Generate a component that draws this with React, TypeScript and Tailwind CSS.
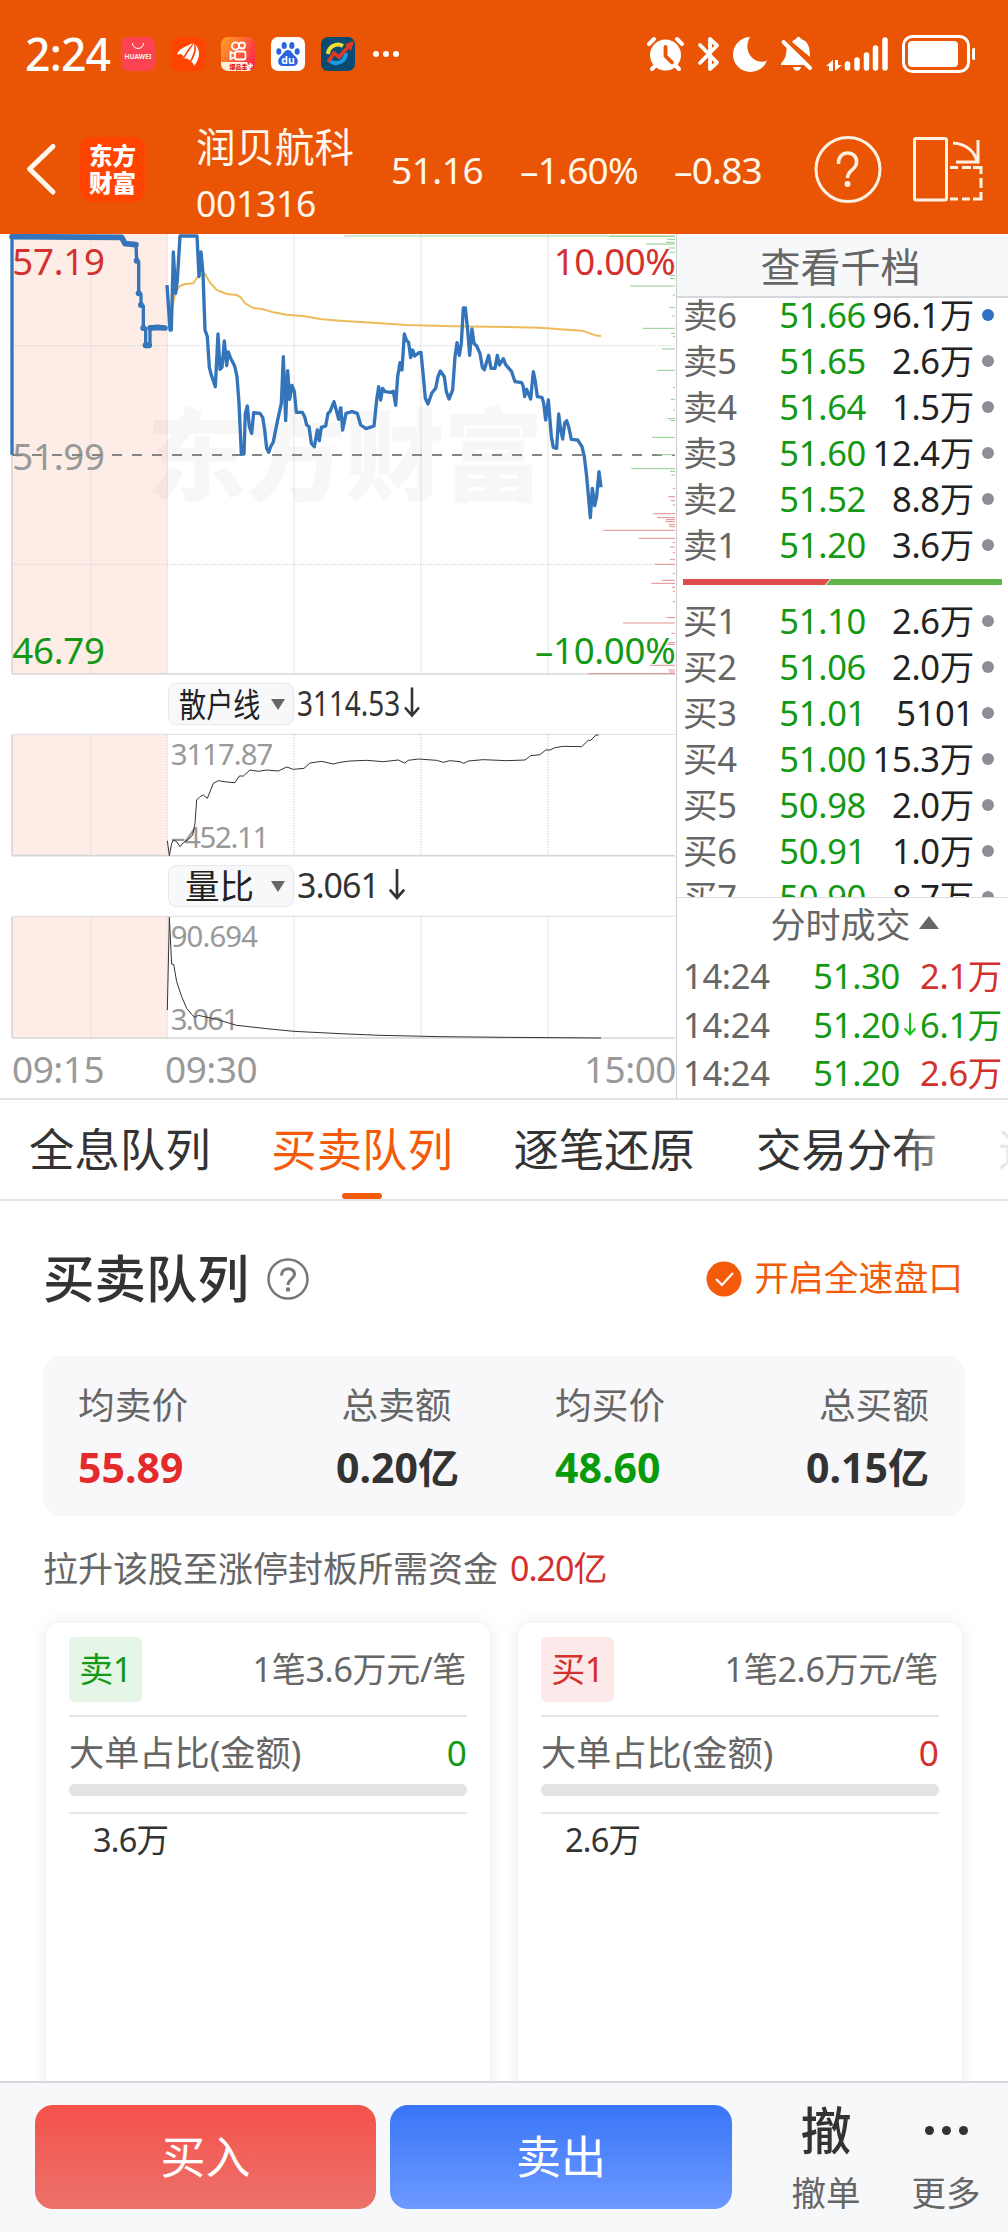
import React from 'react';

interface BookRow {
  label: string;
  price: string;
  volume: string;
  highlight?: boolean;
}

interface TradeRow {
  time: string;
  price: string;
  volume: string;
  side: 'buy' | 'sell';
  arrow?: boolean;
}

const sellRows: BookRow[] = [
  { label: '卖6', price: '51.66', volume: '96.1万', highlight: true },
  { label: '卖5', price: '51.65', volume: '2.6万' },
  { label: '卖4', price: '51.64', volume: '1.5万' },
  { label: '卖3', price: '51.60', volume: '12.4万' },
  { label: '卖2', price: '51.52', volume: '8.8万' },
  { label: '卖1', price: '51.20', volume: '3.6万' },
];

const buyRows: BookRow[] = [
  { label: '买1', price: '51.10', volume: '2.6万' },
  { label: '买2', price: '51.06', volume: '2.0万' },
  { label: '买3', price: '51.01', volume: '5101' },
  { label: '买4', price: '51.00', volume: '15.3万' },
  { label: '买5', price: '50.98', volume: '2.0万' },
  { label: '买6', price: '50.91', volume: '1.0万' },
  { label: '买7', price: '50.90', volume: '8.7万' },
];

const trades: TradeRow[] = [
  { time: '14:24', price: '51.30', volume: '2.1万', side: 'buy' },
  { time: '14:24', price: '51.20', volume: '6.1万', side: 'sell', arrow: true },
  { time: '14:24', price: '51.20', volume: '2.6万', side: 'buy' },
];

const tabs = ['全息队列', '买卖队列', '逐笔还原', '交易分布', '逐'];

// Chart units are a third of a pixel
const auctionLine =
  '36,674 36,20 365,22 375,42 408,44 410,92 416,95 416,190 423,192 423,225 430,228 430,294 437,296 437,346 450,346 450,293 472,291 497,294';
const auctionDots = [[410, 92], [416, 190], [423, 225], [430, 294], [437, 346], [447, 346], [452, 294]];

const priceMorning =
  '501,165 510,300 514,300 520,66 527,190 532,150 540,18 591,18 597,140 603,66 609,130 615,300 622,320 628,412 634,435 646,470 654,312 660,418 666,412 673,333 680,407 685,366 692,385 704,408 711,440 717,520 724,672 732,672 736,550 742,528 748,590 755,610 761,548 780,550 788,562 794,600 800,655 806,667 812,650 820,635 832,575 844,520 850,380 857,572 863,422 869,508 876,466 883,485 889,547 907,547 914,560 920,585 927,590 934,640 943,650 952,600 958,632 964,592 977,588 984,550 990,545 1002,515 1016,568 1022,530';
const priceAfternoon =
  '2,530 8,600 18,550 36,545 52,550 62,585 78,596 102,588 110,510 116,470 122,510 128,475 135,485 152,487 160,484 167,526 173,440 180,398 186,420 193,312 199,330 206,338 212,383 218,360 224,378 237,368 243,367 250,440 256,505 264,522 275,490 287,475 294,440 301,423 313,440 319,485 327,507 338,480 345,380 351,338 358,376 364,340 370,234 376,234 383,300 389,376 396,297 402,340 410,348 420,370 427,412 433,419 446,376 453,415 465,415 472,376 478,405 490,386 497,404 515,425 525,455 545,458 550,470 554,500 560,478 572,507 580,425 586,455 592,500 606,502 611,520 617,570 625,510 634,620 640,652 650,655 656,552 662,600 668,627 674,580 680,572 686,590 694,628 713,630 726,650 733,680 740,740 751,863 757,775 764,827 770,800 777,725 783,772';

const avgMorning =
  '501,165 511,262 527,185 540,168 552,163 580,160 595,138 615,132 630,158 650,180 680,192 710,195 722,202 735,220 760,234 790,238 820,247 860,254 915,259 960,267 1020,272';
const avgAfternoon =
  '0,272 100,278 200,285 340,289 500,291 600,293 660,298 725,302 745,308 765,316 783,318';

const retailMorning =
  '502,512 508,557 515,520 520,510 530,515 540,530 550,518 565,508 578,495 585,460 590,390 600,380 610,375 622,385 640,340 655,332 680,336 705,338 718,318 730,318 750,300 775,304 800,300 835,303 860,291 880,298 912,295 930,279 965,274 1000,282 1020,277';
const retailAfternoon =
  '0,277 30,273 80,271 130,275 175,270 194,279 205,271 235,267 290,271 310,277 330,272 360,275 371,280 385,273 430,269 500,272 555,270 572,257 600,254 617,240 630,240 645,233 670,229 725,230 745,211 752,211 768,195 776,195';

const ratioMorning =
  '502,1020 508,742 515,883 521,883 530,935 545,980 560,1015 583,1042 595,1036 650,1048 710,1066 800,1076 882,1084 1020,1091';
const ratioAfternoon = '0,1091 120,1096 300,1100 500,1102 783,1104';

// [left, y] pairs, every bar grows from the right edge of the chart
const greenBars = [
  [808, 19], [982, 28], [978, 37], [918, 42], [986, 54], [990, 67], [992, 110], [988, 136], [990, 146],
  [870, 168], [998, 195], [988, 233], [996, 258], [908, 295], [993, 310], [998, 320], [966, 357], [951, 421],
  [999, 472], [992, 508], [999, 540], [982, 566], [992, 572], [936, 622], [953, 674], [874, 716], [990, 724], [994, 735],
];
const redBars = [
  [998, 775], [985, 800], [992, 812], [998, 825], [940, 851], [951, 863], [978, 869], [976, 875], [986, 884],
  [988, 890], [790, 901], [896, 925], [998, 938], [990, 951], [998, 968], [990, 989], [945, 1003], [998, 1030],
  [965, 1051], [934, 1060], [996, 1072], [998, 1085], [999, 1115], [980, 1163], [849, 1179], [994, 1210],
  [985, 1238], [980, 1243], [930, 1306], [985, 1320], [988, 1326], [745, 1331],
];

const gridX = [273, 502, 882, 1263, 1644];

const GridLines = ({ top, bottom }: { top: number; bottom: number }) => (
  <g>
    <rect x={36} y={top} width={466} height={bottom - top} fill="#fdede6" />
    {gridX.map((x) => (
      <line key={x} x1={x} x2={x} y1={top} y2={bottom} stroke="#d9d9d9" strokeWidth={4} strokeDasharray="4 4" />
    ))}
    <line x1={36} x2={36} y1={top} y2={bottom} stroke="#d8d8d8" strokeWidth={5} />
    <line x1={36} x2={2025} y1={bottom} y2={bottom} stroke="#d6d6d6" strokeWidth={5} />
  </g>
);

const PriceChart = () => (
  <svg className="block h-[442px] w-[676px]" viewBox="0 12 2028 1326" fontSize={110}>
    <GridLines top={12} bottom={1332} />
    <text
      x={440} y={788} fontSize={300} fontWeight={900} textLength={1190} fill="#000" opacity={0.027}
    >
      东方财富
    </text>
    {[347, 1003].map((y) => (
      <line key={y} x1={36} x2={2025} y1={y} y2={y} stroke="#d0d0d0" strokeWidth={3} strokeDasharray="4 4" />
    ))}
    <text x={37} y={719} fill="#999" textLength={278}>51.99</text>
    <line x1={36} x2={2025} y1={675} y2={675} stroke="#858585" strokeWidth={6} strokeDasharray="30 30" />
    <line x1={1032} x2={2025} y1={18} y2={18} stroke="#c5dfc0" strokeWidth={5} />
    <g transform="translate(1020 0)">
      {greenBars.map(([x, y]) => (
        <line key={y} x1={x} x2={1005} y1={y} y2={y} stroke="#8fce8f" strokeWidth={3} />
      ))}
      {redBars.map(([x, y]) => (
        <line key={y} x1={x} x2={1005} y1={y} y2={y} stroke="#e38f8f" strokeWidth={3} />
      ))}
    </g>
    <g fill="none" stroke="#edbb58" strokeWidth={6}>
      <polyline points={avgMorning} />
      <polyline points={avgAfternoon} transform="translate(1020 0)" />
    </g>
    <g fill="none" stroke="#3374bb" strokeWidth={10} strokeLinejoin="round">
      <polyline points={auctionLine} />
      <polyline points={priceMorning} />
      <polyline points={priceAfternoon} transform="translate(1020 0)" />
    </g>
    <g fill="none" stroke="#3374bb" strokeWidth={17} strokeLinecap="round" strokeLinejoin="round">
      <path d="M36 20L365 22L375 41L408 44M437 346H446M450 294L472 292L495 294" />
    </g>
    {auctionDots.map(([x, y]) => (
      <circle key={`${x}-${y}`} cx={x} cy={y} r={9} fill="#3374bb" />
    ))}
    <text x={37} y={135} fill="#d3312d" textLength={278}>57.19</text>
    <text x={37} y={1301} fill="#149914" textLength={278}>46.79</text>
    <text x={2027} y={135} fill="#d3312d" textAnchor="end" textLength={366}>10.00%</text>
    <text x={2027} y={1301} fill="#149914" textAnchor="end" textLength={422}>–10.00%</text>
  </svg>
);

const RetailChart = () => (
  <svg className="block h-[124px] w-[676px]" viewBox="0 189 2028 372" fontSize={88} fill="#999">
    <GridLines top={194} bottom={557} />
    <line x1={36} x2={2025} y1={193} y2={193} stroke="#dcdcdc" strokeWidth={3} />
    <text x={512} y={285} textLength={308}>3117.87</text>
    <text x={512} y={534} textLength={296}>–452.11</text>
    <g fill="none" stroke="#333" strokeWidth={3}>
      <polyline points={retailMorning} />
      <polyline points={retailAfternoon} transform="translate(1020 0)" />
    </g>
  </svg>
);

const RatioChart = () => (
  <svg className="block h-[125px] w-[676px]" viewBox="0 735 2028 375" fontSize={88} fill="#999">
    <GridLines top={740} bottom={1104} />
    <line x1={36} x2={2025} y1={739} y2={739} stroke="#dcdcdc" strokeWidth={3} />
    <text x={512} y={831} textLength={262}>90.694</text>
    <text x={512} y={1080} textLength={206}>3.061</text>
    <g fill="none" stroke="#333" strokeWidth={3}>
      <polyline points={ratioMorning} />
      <polyline points={ratioAfternoon} transform="translate(1020 0)" />
    </g>
  </svg>
);

const DownArrow = ({ className }: { className: string }) => (
  <svg className={className} viewBox="0 0 16 30" fill="none" stroke="currentColor" strokeWidth={2.6}>
    <path d="M8 0V28M1 20L8 28L15 20" />
  </svg>
);

const StatusBar = () => (
  <div className="flex h-[108px] items-center text-white">
    <span className="ml-[25px] w-[96px] text-[44.5px] leading-none font-medium tracking-[-0.8px]">2:24</span>
    <div className="flex items-center gap-4">
      <svg className="size-[34px]" viewBox="0 0 34 34">
        <rect width={34} height={34} rx={7} fill="#fb4351" />
        <path d="M11.500 6a5.500 5.500 0 0 0 11 0" fill="none" stroke="#fff" strokeWidth={1} />
        <text x={17} y={22} fontSize={6.6} fontWeight={600} fill="#fff" textAnchor="middle" textLength={27}>HUAWEI</text>
      </svg>
      <svg className="size-[34px]" viewBox="0 0 34 34">
        <rect width={34} height={34} rx={7} fill="#ff4300" />
        <path d="M6 18C7 12 14 10 22 6C19 11 15 15 13 20C11 17 9 16 6 18Z" fill="#fff" />
        <path d="M13 22C16 16 21 11 23 5.500C25 11 22 18 19 24C18 22 16 21 13 22Z" fill="#fff" />
        <path d="M20 25C24 19 26 13 24 7C30 13 29 22 23 29C23 27 22 26 20 25Z" fill="#fff" />
        <path d="M12.500 21C15 15 19 10 23 6M19.500 25C23 19 25 12 23.500 6" fill="none" stroke="#ff4300" strokeWidth={1} />
      </svg>
      <svg className="size-[34px]" viewBox="0 0 34 34">
        <defs>
          <linearGradient id="ks" x1="0" y1="0" x2="1" y2="0.6">
            <stop offset="0" stopColor="#ffa526" />
            <stop offset="1" stopColor="#ff2f45" />
          </linearGradient>
          <clipPath id="ksClip"><rect width={34} height={34} rx={7} /></clipPath>
        </defs>
        <g clipPath="url(#ksClip)">
          <rect width={34} height={34} fill="url(#ks)" />
          <path d="M0 25H26L30 34H0Z" fill="#fdeedd" />
        </g>
        <g fill="none" stroke="#fff" strokeWidth={1.800}>
          <circle cx={14.500} cy={9} r={3.600} />
          <circle cx={21} cy={8.500} r={3} />
          <rect x={14} y={14.500} width={10.500} height={8} rx={2} />
          <path d="M14 17L9.500 15V22L14 20" />
        </g>
        <text x={8.500} y={32} fontSize={6} fontWeight={900} fill="#e01d1d">爆品金</text>
        <path d="M29.500 26V31M27 28.500H32" stroke="#fff" strokeWidth={1.500} />
      </svg>
      <svg className="size-[34px]" viewBox="0 0 34 34">
        <rect width={34} height={34} rx={7} fill="#fff" />
        <g fill="#2a62e0">
          <ellipse cx={7.800} cy={14.500} rx={2.500} ry={3.300} />
          <ellipse cx={13.200} cy={8.500} rx={2.600} ry={3.600} />
          <ellipse cx={20.800} cy={8.500} rx={2.600} ry={3.600} />
          <ellipse cx={26.200} cy={14.500} rx={2.500} ry={3.300} />
          <path d="M17 13C20 13 21 16 24 19C28 22 28 29 22 29H12C6 29 6 22 10 19C13 16 14 13 17 13Z" />
        </g>
        <text x={17} y={27} fontSize={10.500} fontWeight={700} fill="#fff" textAnchor="middle">du</text>
      </svg>
      <svg className="size-[34px]" viewBox="0 0 34 34">
        <rect width={34} height={34} rx={7} fill="#0b4a72" />
        <path d="M7 17A10 10 0 0 1 22 9" fill="none" stroke="#f2dc2e" strokeWidth={4} />
        <path d="M25 16A10 10 0 0 1 9 24" fill="none" stroke="#1d9ae0" strokeWidth={4} />
        <path d="M7 25L13 16L18 20L28 9" fill="none" stroke="#e03a24" strokeWidth={3.500} />
        <path d="M24 7L33 4L30 14Z" fill="#e03a24" />
      </svg>
    </div>
    <div className="ml-[18px] flex gap-1">
      <i className="size-1.5 rounded-full bg-white" />
      <i className="size-1.5 rounded-full bg-white" />
      <i className="size-1.5 rounded-full bg-white" />
    </div>
    <svg className="mr-[33px] ml-auto h-[40px] w-[332px]" viewBox="643 33 332 40" fill="#fff">
      {/* alarm */}
      <circle cx={665.500} cy={54} r={15.500} />
      <g stroke="#fff" strokeWidth={4} strokeLinecap="round">
        <path d="M649 43L654 38M682 43L677 38M652 68L656 64M679 68L675 64" />
      </g>
      <path d="M665.500 46V55L672 61.500" fill="none" stroke="#e95504" strokeWidth={3.800} strokeLinecap="round" />
      {/* bluetooth */}
      <path d="M700 44L717 61.500L710 68V38L717 44.500L700 62" fill="none" stroke="#fff" strokeWidth={3.800} strokeLinejoin="round" strokeLinecap="round" />
      {/* do not disturb */}
      <path d="M750 36A17.500 17.500 0 1 0 767 59.500C757 65 741 52 750 36Z" />
      {/* muted bell */}
      <path d="M787 45L806 64H782C780 64 781 62 783 60C787 55 786 50 787 45ZM792 41C793 39 795 38.500 796 38C797 35 800 35 801 38C808 40 810 46 810 56ZM793 66H801C800 71 794 71 793 66Z" />
      <path d="M783.500 41L810 67" stroke="#fff" strokeWidth={4} strokeLinecap="round" />
      {/* signal */}
      <path d="M833 70V59L826 65H829V70ZM835 59V70L842 64H838V59Z" />
      <g stroke="#fff" strokeWidth={5.500} strokeLinecap="round">
        <path d="M847.500 63V67M857 59V67M866.500 54V67M875.500 47V67M885 39V67" />
      </g>
      {/* battery */}
      <rect x={903.500} y={35.500} width={65} height={35} rx={9} fill="none" stroke="#fff" strokeWidth={3} />
      <rect x={908} y={40} width={50} height={26} rx={4} />
      <rect x={972} y={47} width={4} height={12} rx={2} />
    </svg>
  </div>
);

const StockHeader = () => (
  <div className="flex h-[126px] items-start text-[#fff7ec]">
    <svg className="mt-[34px] ml-[25px] h-[54px] w-[33px]" viewBox="0 0 33 54" fill="none" stroke="#fff7ec" strokeWidth={5} strokeLinecap="round" strokeLinejoin="round">
      <path d="M28 4.500L4.500 27L28 50" />
    </svg>
    <div className="mt-[29px] ml-[22px] flex size-[65px] flex-col items-center justify-center rounded-xl bg-[#ff4400] text-[23.5px] leading-[27px] font-black text-white">
      <span>东方</span>
      <span>财富</span>
    </div>
    <div className="mt-[15px] ml-[51px] w-[195px]">
      <div className="text-[39.5px] leading-[48px]">润贝航科</div>
      <div className="mt-1 text-[35.5px] leading-[56px] tracking-[-0.3px]">001316</div>
    </div>
    <div className="mt-[38px] flex text-[37px] leading-[48px] tracking-[-0.5px]">
      <span className="w-[129px]">51.16</span>
      <span className="w-[154px] tracking-[-0.8px]">–1.60%</span>
      <span className="tracking-[-0.8px]">–0.83</span>
    </div>
    <svg className="mt-[27px] mr-[24px] ml-auto h-[68px] w-[170px]" viewBox="815 135 170 68" fill="none" stroke="#fff1e2" strokeWidth={3}>
      <circle cx={849} cy={169.500} r={32} />
      <path d="M839.500 164C838.500 149 859 150 857.500 163C857 170 848.500 170 848.500 178" strokeWidth={3.500} />
      <circle cx={848.500} cy={184} r={1.500} />
      <rect x={915.500} y={138.500} width={32} height={61.500} rx={1.500} />
      <path d="M954 143C968 144 976 152 978 162M979 140V162H957" />
      <path d="M951 167.500H959M963 167.500H972M974 167.500H982V174M982 178V188M982 192V199H974M971 199H963M959 199H951" />
    </svg>
  </div>
);

const Selector = ({ children }: { children: React.ReactNode }) => (
  <div className="flex h-[42px] w-[126px] shrink-0 items-center justify-between rounded-lg border-[1.5px] border-[#e6e8eb] bg-[#f7f8fa] pr-2 text-[#222]">
    {children}
    <svg className="h-[11px] w-[14px]" viewBox="0 0 14 11" fill="#666"><path d="M0 0H14L7 11Z" /></svg>
  </div>
);

const BookLine = ({ row }: { row: BookRow }) => (
  <div className="flex h-[46px] shrink-0 items-center text-[34.5px] leading-[46px] tracking-[-0.3px]">
    <span className="w-[96px] pl-1.5 text-[#666]">{row.label}</span>
    <span className="w-[93px] text-right text-[#149914]">{row.price}</span>
    <span className="w-[108px] text-right whitespace-nowrap text-[#222]">{row.volume}</span>
    <i className={`ml-2 size-3 rounded-full ${row.highlight ? 'bg-[#2f72c4]' : 'bg-[#8e8e96]'}`} />
  </div>
);

const OrderBook = () => (
  <div className="flex w-[332px] flex-col border-l border-[#ccc]">
    <div className="h-[64px] shrink-0 border-b-2 border-[#d5d8dc] bg-[#f7f8fa] pr-1 text-center text-[40px] leading-[65px] text-[#666]">
      查看千档
    </div>
    <div className="h-[599px] overflow-hidden">
      <div className="-mt-1.5">
        {sellRows.map((row) => <BookLine key={row.label} row={row} />)}
      </div>
      <svg className="mt-[11px] mb-[13px] ml-1.5 block h-1.5 w-[319px]" viewBox="0 0 319 6">
        <path d="M0 0H147L142 6H0Z" fill="#dc4d4d" />
        <path d="M148 0H319V6H143Z" fill="#5fb54a" />
      </svg>
      <div>
        {buyRows.map((row) => <BookLine key={row.label} row={row} />)}
      </div>
    </div>
    <div className="border-t border-[#dcdcdc]">
      <div className="flex h-[54px] items-center justify-center gap-2 pl-6 text-[35px] leading-[54px] text-[#666]">
        分时成交
        <svg className="mb-1.5 h-[13px] w-5" viewBox="0 0 20 13" fill="#666"><path d="M0 13L10 0L20 13Z" /></svg>
      </div>
      {trades.map((t, i) => (
        <div key={i} className="flex h-[48.5px] items-center text-[34.5px] leading-[48px] tracking-[-0.3px]">
          <span className="w-[128px] pl-1.5 text-[#666]">{t.time}</span>
          <span className="w-[95px] text-right text-[#149914]">{t.price}</span>
          <span className="flex w-5 justify-center text-[#11c711]">
            {t.arrow && <DownArrow className="h-[23px] w-4 overflow-visible" />}
          </span>
          <span className={`w-[80px] text-right whitespace-nowrap ${t.side === 'buy' ? 'text-[#d3312d]' : 'text-[#149914]'}`}>
            {t.volume}
          </span>
        </div>
      ))}
    </div>
  </div>
);

const ChartPanel = () => (
  <div className="w-[676px]">
    <PriceChart />
    <div className="flex h-[57px] items-start pt-[7px] pl-[168px] text-[34px] leading-[40px]">
      <Selector><span className="w-[80px] origin-left translate-x-2.5 scale-x-[0.81] text-[33.5px] whitespace-nowrap">散户线</span></Selector>
      <span className="ml-[3px] w-[107px] origin-left scale-x-[0.82] text-[#333]">3114.53</span>
      <DownArrow className="mt-1 h-[31px] w-4 text-[#333]" />
    </div>
    <RetailChart />
    <div className="flex h-[58px] items-start pt-2 pl-[168px] text-[34px] leading-[40px]">
      <Selector><span className="pl-4 text-[34.5px]">量比</span></Selector>
      <span className="ml-[3px] w-[91px] tracking-[-1px] text-[#333]">3.061</span>
      <DownArrow className="mt-1 h-[31px] w-[18px] text-[#333]" />
    </div>
    <RatioChart />
    <div className="flex h-[58px] pl-[12px] text-[37px] leading-[57px] tracking-[-0.5px] text-[#999]">
      <span className="w-[153px]">09:15</span>
      <span>09:30</span>
      <span className="ml-auto">15:00</span>
    </div>
  </div>
);

const TabBar = () => (
  <div className="relative flex h-[103px] overflow-hidden border-y-2 border-[#e3e3e3] pl-[29px]">
    {tabs.map((tab, i) => (
      <div key={i} className={`flex w-[242.3px] shrink-0 flex-col text-[45.4px] leading-[99px] ${i === 1 ? 'text-[#f35a0a]' : 'text-[#333]'}`}>
        <span className="h-[93px]">{tab}</span>
        {i === 1 && <i className="ml-[71px] h-1.5 w-10 rounded-full bg-[#f35a0a]" />}
      </div>
    ))}
    <div className="absolute inset-y-0 right-0 w-[110px] bg-linear-to-r from-white/0 via-white/70 to-white/90" />
  </div>
);

interface QueueCardProps {
  badge: string;
  badgeClass: string;
  summary: string;
  ratioClass: string;
  amount: string;
}

const QueueCard: React.FC<QueueCardProps> = ({ badge, badgeClass, summary, ratioClass, amount }) => (
  <div className="h-[520px] w-[444px] rounded-xl bg-white px-[23px] pt-[14px] text-[#666] shadow-[0_0_16px_rgba(0,0,0,0.09)]">
    <div className="flex h-[65px] items-center justify-between">
      <span className={`h-[65px] w-[73px] rounded-md text-center text-[34px] leading-[64px] tracking-[-0.5px] ${badgeClass}`}>{badge}</span>
      <span className="pr-px text-[34px] tracking-[-0.3px]">{summary}</span>
    </div>
    <div className="mt-[13px] flex h-[69px] items-center justify-between border-t-2 border-[#e6e6e6] pt-[3px] text-[35.2px]">
      <span>大单占比(金额)</span>
      <span className={ratioClass}>0</span>
    </div>
    <div className="h-3 rounded-md bg-[#e3e3e3]" />
    <div className="mt-4 border-t-2 border-[#e6e6e6] pt-0.5 pl-[24px] text-[32.500px] leading-[48px] tracking-[-0.8px] text-[#333]">{amount}</div>
  </div>
);

const QueueSection = () => (
  <div className="h-[880px] overflow-hidden px-[43px]">
    <div className="flex h-[155px] items-center">
      <h2 className="text-[51.5px] font-medium text-[#333]">买卖队列</h2>
      <svg className="ml-[18px] size-[42px]" viewBox="0 0 42 42" fill="none" stroke="#777" strokeWidth={2.500}>
        <circle cx={21} cy={21} r={19.500} />
        <path d="M14.500 17.500C14.500 8.500 28 9 27.500 16.500C27 21 21 21.500 21 27" strokeWidth={3} />
        <circle cx={21} cy={31.500} r={1} />
      </svg>
      <div className="mr-0.5 ml-auto flex items-center gap-3 text-[34.8px] text-[#f35a0a]">
        <svg className="size-9" viewBox="0 0 36 36">
          <circle cx={18} cy={18} r={17.500} fill="#f35a0a" />
          <path d="M10 18L16 24L27 12" fill="none" stroke="#fff" strokeWidth={2.200} />
        </svg>
        开启全速盘口
      </div>
    </div>

    <div className="flex h-[160px] rounded-[18px] bg-[#f8f8fa] pt-[24px] pr-9 pl-[35px] text-[36.700px] leading-[50px] text-[#666]">
      <div className="w-[258px]">
        <div>均卖价</div>
        <div className="mt-2.5 text-[41px] leading-[54px] font-bold text-[#e32b2b]">55.89</div>
      </div>
      <div className="w-[121px] text-center whitespace-nowrap">
        <div>总卖额</div>
        <div className="mt-2.5 text-[41px] leading-[54px] font-bold text-[#333]">0.20亿</div>
      </div>
      <div className="ml-[98px]">
        <div>均买价</div>
        <div className="mt-2.5 text-[41px] leading-[54px] font-bold text-[#0a9b0a]">48.60</div>
      </div>
      <div className="ml-auto text-right">
        <div>总买额</div>
        <div className="mt-2.5 text-[41px] leading-[54px] font-bold text-[#333]">0.15亿</div>
      </div>
    </div>

    <div className="flex h-[107px] gap-3 text-[35px] leading-[105px] text-[#666]">
      <span>拉升该股至涨停封板所需资金</span>
      <span className="text-[34px] tracking-[-1px] text-[#d3312d]">0.20亿</span>
    </div>

    <div className="flex justify-between px-[3px]">
      <QueueCard
        badge="卖1"
        badgeClass="bg-[#e5f5e6] text-[#149914]"
        summary="1笔3.6万元/笔"
        ratioClass="text-[#149914]"
        amount="3.6万"
      />
      <QueueCard
        badge="买1"
        badgeClass="bg-[#fde9e9] text-[#d3312d]"
        summary="1笔2.6万元/笔"
        ratioClass="text-[#d3312d]"
        amount="2.6万"
      />
    </div>
  </div>
);

const BottomBar = () => (
  <div className="flex h-[151px] border-t-2 border-[#d6d8db] bg-[#f7f8fa] pt-[22px] pl-[35px]">
    <button className="h-[104px] w-[341px] rounded-[18px] bg-linear-to-b from-[#f4514a] to-[#ec716b] text-[45px] text-white">买入</button>
    <button className="ml-[14px] h-[104px] w-[342px] rounded-[18px] bg-linear-to-b from-[#3975f7] to-[#6c99ff] text-[45px] text-white">卖出</button>
    <div className="ml-[53px] w-[82px] text-center">
      <div className="h-[56px] text-[51px] leading-[50px] font-medium text-[#333]">撤</div>
      <div className="text-[34.500px] leading-[63px] text-[#666]">撤单</div>
    </div>
    <div className="ml-[38px] w-[82px] text-center">
      <div className="flex h-[56px] items-center justify-center gap-2 pb-1.5">
        <i className="size-[9px] rounded-full bg-[#333]" />
        <i className="size-[9px] rounded-full bg-[#333]" />
        <i className="size-[9px] rounded-full bg-[#333]" />
      </div>
      <div className="text-[34.500px] leading-[63px] text-[#666]">更多</div>
    </div>
  </div>
);

export default function App() {
  return (
    <div
      lang="zh-CN"
      className="h-[2232px] w-[1008px] overflow-hidden bg-white font-['Noto_Sans','Noto_Sans_CJK_SC',sans-serif]"
    >
      <div className="h-[234px] bg-[#e95504]">
        <StatusBar />
        <StockHeader />
      </div>
      <div className="flex h-[864px]">
        <ChartPanel />
        <OrderBook />
      </div>
      <TabBar />
      <QueueSection />
      <BottomBar />
    </div>
  );
}
